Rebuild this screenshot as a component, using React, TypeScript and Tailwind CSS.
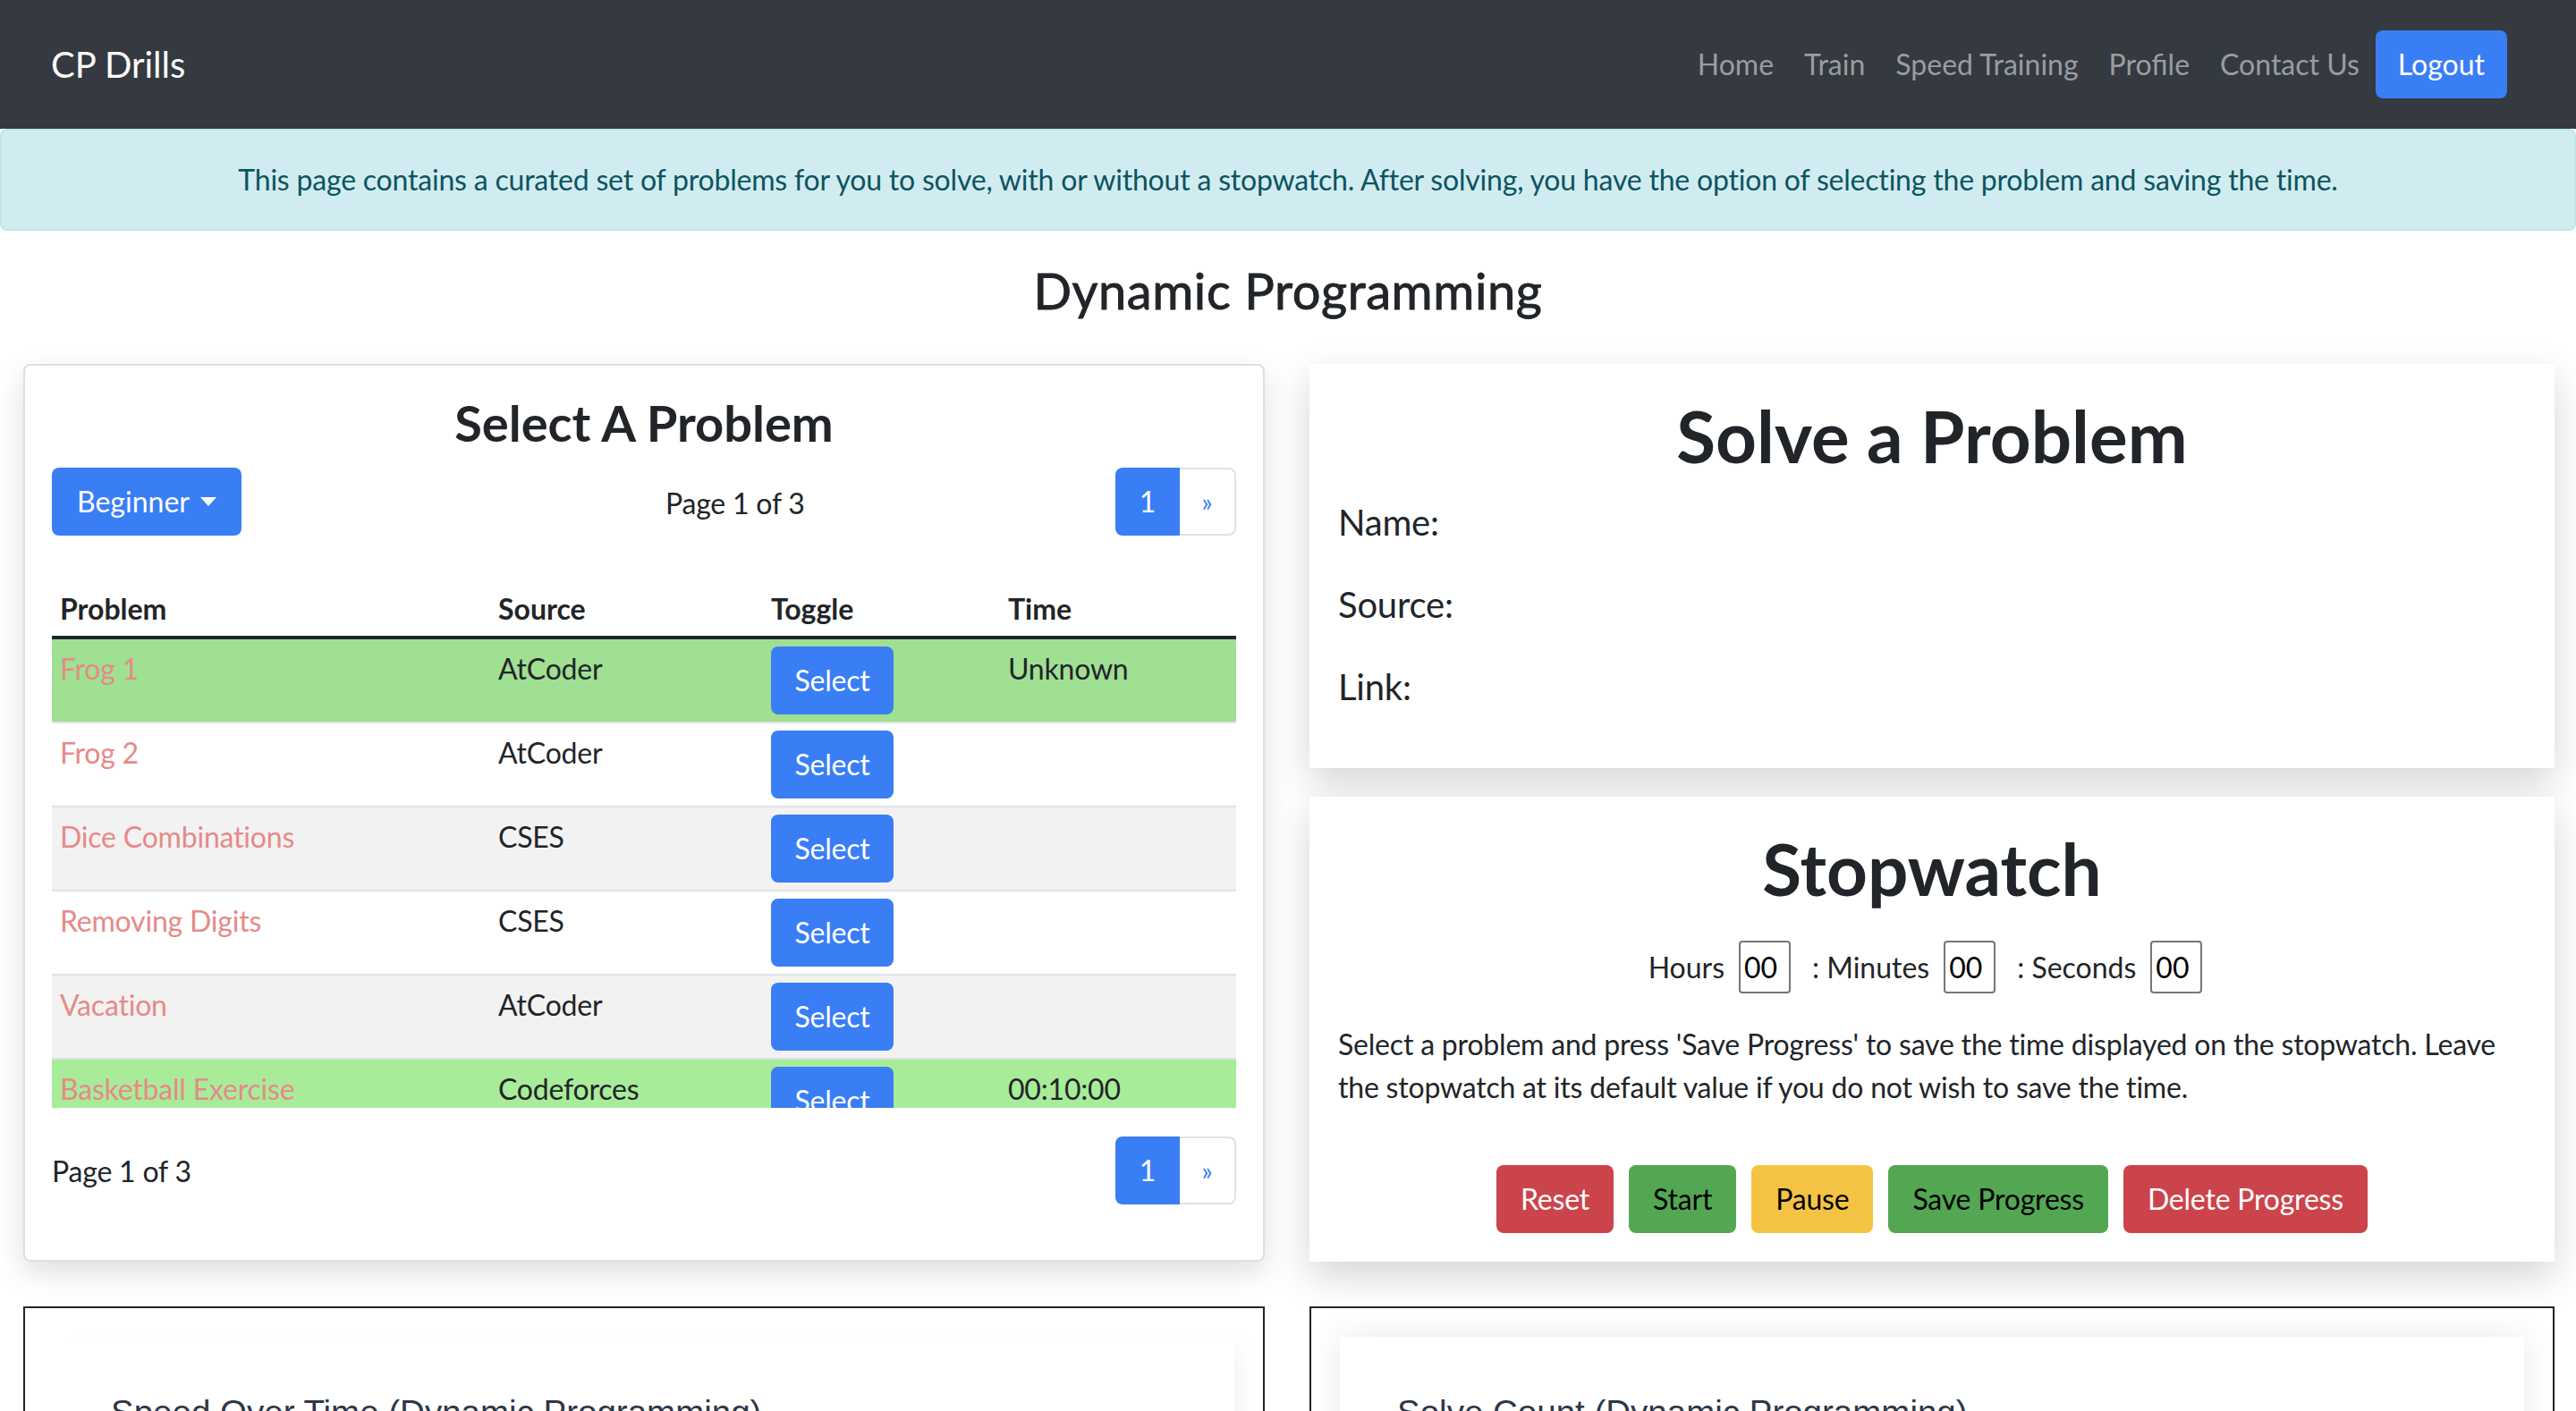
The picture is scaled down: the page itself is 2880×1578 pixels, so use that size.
import React from "react";

const rows = [
  { name: "Frog 1", source: "AtCoder", time: "Unknown", bg: "bg-[#9fe092]" },
  { name: "Frog 2", source: "AtCoder", time: "", bg: "bg-white" },
  { name: "Dice Combinations", source: "CSES", time: "", bg: "bg-[#f2f2f2]" },
  { name: "Removing Digits", source: "CSES", time: "", bg: "bg-white" },
  { name: "Vacation", source: "AtCoder", time: "", bg: "bg-[#f2f2f2]" },
  { name: "Basketball Exercise", source: "Codeforces", time: "00:10:00", bg: "bg-[#a8ec9a]" },
  { name: "Longest Path", source: "AtCoder", time: "", bg: "bg-white" },
];

function Pager() {
  return (
    <div className="flex h-[76px] text-[32px]">
      <div className="flex w-[72px] items-center justify-center rounded-l-[8px] bg-[#3a7ef6] text-white">1</div>
      <div className="flex w-[63px] items-center justify-center rounded-r-[8px] border-2 border-l-0 border-[#dee2e6] bg-white text-[28px] text-[#3a7ef6]">»</div>
    </div>
  );
}

function ChartCard({ title, inner }: { title: string; inner: boolean }) {
  return (
    <div className="h-[420px] border-2 border-[#212529] bg-white">
      <div
        className={`m-[32px] h-[360px] bg-white px-[64px] pt-[62px] ${
          inner ? "shadow-[0_0_36px_rgba(0,0,0,0.09)]" : "shadow-[14px_0_28px_-14px_rgba(0,0,0,0.08)]"
        }`}
      >
        <div className="font-['Liberation_Sans',Arial,sans-serif] text-[38.5px] leading-[46px] tracking-normal text-[#2d3748]">
          {title}
        </div>
      </div>
    </div>
  );
}

const inputCls =
  "h-[59px] w-[58px] rounded-[4px] border-2 border-[#767676] bg-white px-[4px] text-[32px] text-black outline-none";

export default function App() {
  return (
    <div className="min-h-screen overflow-hidden bg-white font-['Lato','Noto_Sans',sans-serif] tracking-[-0.2px] text-[#212529]">
      <nav className="flex h-[144px] items-center bg-[#343a40] pl-[57px] pr-[77px] tracking-normal">
        <span className="text-[40px] leading-[48px] text-white">CP Drills</span>
        <div className="ml-auto flex items-center text-[32px] leading-[48px] text-[#9a9da0]">
          <span className="px-[17px]">Home</span>
          <span className="px-[17px]">Train</span>
          <span className="px-[17px]">Speed Training</span>
          <span className="px-[17px]">Profile</span>
          <span className="px-[17px]">Contact Us</span>
          <button className="ml-[1px] h-[76px] rounded-[8px] bg-[#3a7ef6] px-[25px] text-white">Logout</button>
        </div>
      </nav>

      <div className="rounded-[8px] border-2 border-[#bee5eb] bg-[#d1ecf1] py-[31px] text-center text-[32px] leading-[48px] text-[#0c5460]">
        This page contains a curated set of problems for you to solve, with or without a stopwatch. After solving, you have the option of selecting the problem and saving the time.
      </div>

      <h3 className="mt-[33px] text-center text-[56px] font-normal leading-[67px] tracking-[0.6px] [-webkit-text-stroke:0.9px_#212529]">
        Dynamic Programming
      </h3>

      <div className="mt-[49px] grid grid-cols-2">
        <div className="px-[26px]">
          <div className="rounded-[8px] border-2 border-[#dfdfdf] bg-white px-[30px] pb-[62px] pt-[30px] shadow-[0_12px_32px_rgba(0,0,0,0.13)]">
            <h3 className="text-center text-[56px] font-bold leading-[67px] tracking-normal">Select A Problem</h3>
            <div className="mt-[17px] flex items-center">
              <button className="flex h-[76px] items-center rounded-[8px] bg-[#3a7ef6] px-[28px] text-[32px] tracking-normal text-white">
                Beginner
                <span className="ml-[12px] inline-block h-0 w-0 border-x-[9px] border-t-[10px] border-x-transparent border-t-white" />
              </button>
              <span className="ml-[474px] mt-[3px] text-[32px]">Page 1 of 3</span>
              <div className="ml-auto">
                <Pager />
              </div>
            </div>
            <div className="mt-[48px] h-[592px] overflow-hidden">
              <table className="w-full table-fixed border-collapse text-[32px]">
                <colgroup>
                  <col className="w-[490px]" />
                  <col className="w-[305px]" />
                  <col className="w-[265px]" />
                  <col />
                </colgroup>
                <thead>
                  <tr className="border-b-4 border-[#212529] text-left">
                    <th className="px-[9px] pb-[6px] pt-[10px] font-bold leading-[48px] tracking-normal">Problem</th>
                    <th className="px-[9px] pb-[6px] pt-[10px] font-bold leading-[48px] tracking-normal">Source</th>
                    <th className="px-[9px] pb-[6px] pt-[10px] font-bold leading-[48px] tracking-normal">Toggle</th>
                    <th className="px-[9px] pb-[6px] pt-[10px] font-bold leading-[48px] tracking-normal">Time</th>
                  </tr>
                </thead>
                <tbody>
                  {rows.map((r, i) => (
                    <tr key={r.name} className={`${r.bg} ${i > 0 ? "border-t-2 border-[#dee2e6]" : ""}`}>
                      <td className="px-[9px] pb-[8px] pt-[9px] align-top leading-[48px] text-[#e68a88]">{r.name}</td>
                      <td className="px-[9px] pb-[8px] pt-[9px] align-top leading-[48px]">{r.source}</td>
                      <td className="px-[9px] py-[8px] align-top">
                        <button className="h-[76px] w-[137px] rounded-[8px] bg-[#3a7ef6] text-white">Select</button>
                      </td>
                      <td className="px-[9px] pb-[8px] pt-[9px] align-top leading-[48px]">{r.time}</td>
                    </tr>
                  ))}
                </tbody>
              </table>
            </div>
            <div className="mt-[32px] flex items-center">
              <span className="mt-[2px] text-[32px]">Page 1 of 3</span>
              <div className="ml-auto">
                <Pager />
              </div>
            </div>
          </div>
        </div>

        <div className="flex flex-col gap-[32px] px-[24px]">
          <div className="bg-white px-[32px] pb-[29px] pt-[32px] shadow-[0_16px_40px_rgba(0,0,0,0.17)]">
            <h1 className="mb-[19px] text-center text-[80px] font-bold leading-[96px] tracking-normal">Solve a Problem</h1>
            <p className="mb-[32px] text-[40px] leading-[60px]">Name:</p>
            <p className="mb-[32px] text-[40px] leading-[60px]">Source:</p>
            <p className="mb-[32px] text-[40px] leading-[60px]">Link:</p>
          </div>
          <div className="bg-white p-[32px] shadow-[0_16px_40px_rgba(0,0,0,0.17)]">
            <h1 className="mb-[16px] text-center text-[80px] font-bold leading-[96px] tracking-normal">Stopwatch</h1>
            <div className="flex h-[92px] items-center justify-center pr-[15px] text-[32px] leading-[48px] tracking-normal">
              <span className="mt-[2px]">Hours</span>
              <input readOnly value="00" className={`ml-[16px] ${inputCls}`} />
              <span className="ml-[24px] mt-[2px]">: Minutes</span>
              <input readOnly value="00" className={`ml-[16px] ${inputCls}`} />
              <span className="ml-[24px] mt-[2px]">: Seconds</span>
              <input readOnly value="00" className={`ml-[16px] ${inputCls}`} />
            </div>
            <p className="mt-[17px] text-[32px] leading-[48px]">
              Select a problem and press 'Save Progress' to save the time displayed on the stopwatch. Leave the stopwatch at its default value if you do not wish to save the time.
            </p>
            <div className="mt-[63px] flex justify-center gap-[17px] text-[32px]">
              <button className="h-[76px] rounded-[8px] bg-[#cc444b] px-[27px] text-white">Reset</button>
              <button className="h-[76px] rounded-[8px] bg-[#53a753] px-[27px] text-black">Start</button>
              <button className="h-[76px] rounded-[8px] bg-[#f5c344] px-[27px] text-black">Pause</button>
              <button className="h-[76px] rounded-[8px] bg-[#53a753] px-[27px] text-black">Save Progress</button>
              <button className="h-[76px] rounded-[8px] bg-[#cc444b] px-[27px] text-white">Delete Progress</button>
            </div>
          </div>
        </div>
      </div>

      <div className="mt-[50px] grid grid-cols-2">
        <div className="px-[26px]">
          <ChartCard title="Speed Over Time (Dynamic Programming)" inner={false} />
        </div>
        <div className="px-[24px]">
          <ChartCard title="Solve Count (Dynamic Programming)" inner={true} />
        </div>
      </div>
    </div>
  );
}
